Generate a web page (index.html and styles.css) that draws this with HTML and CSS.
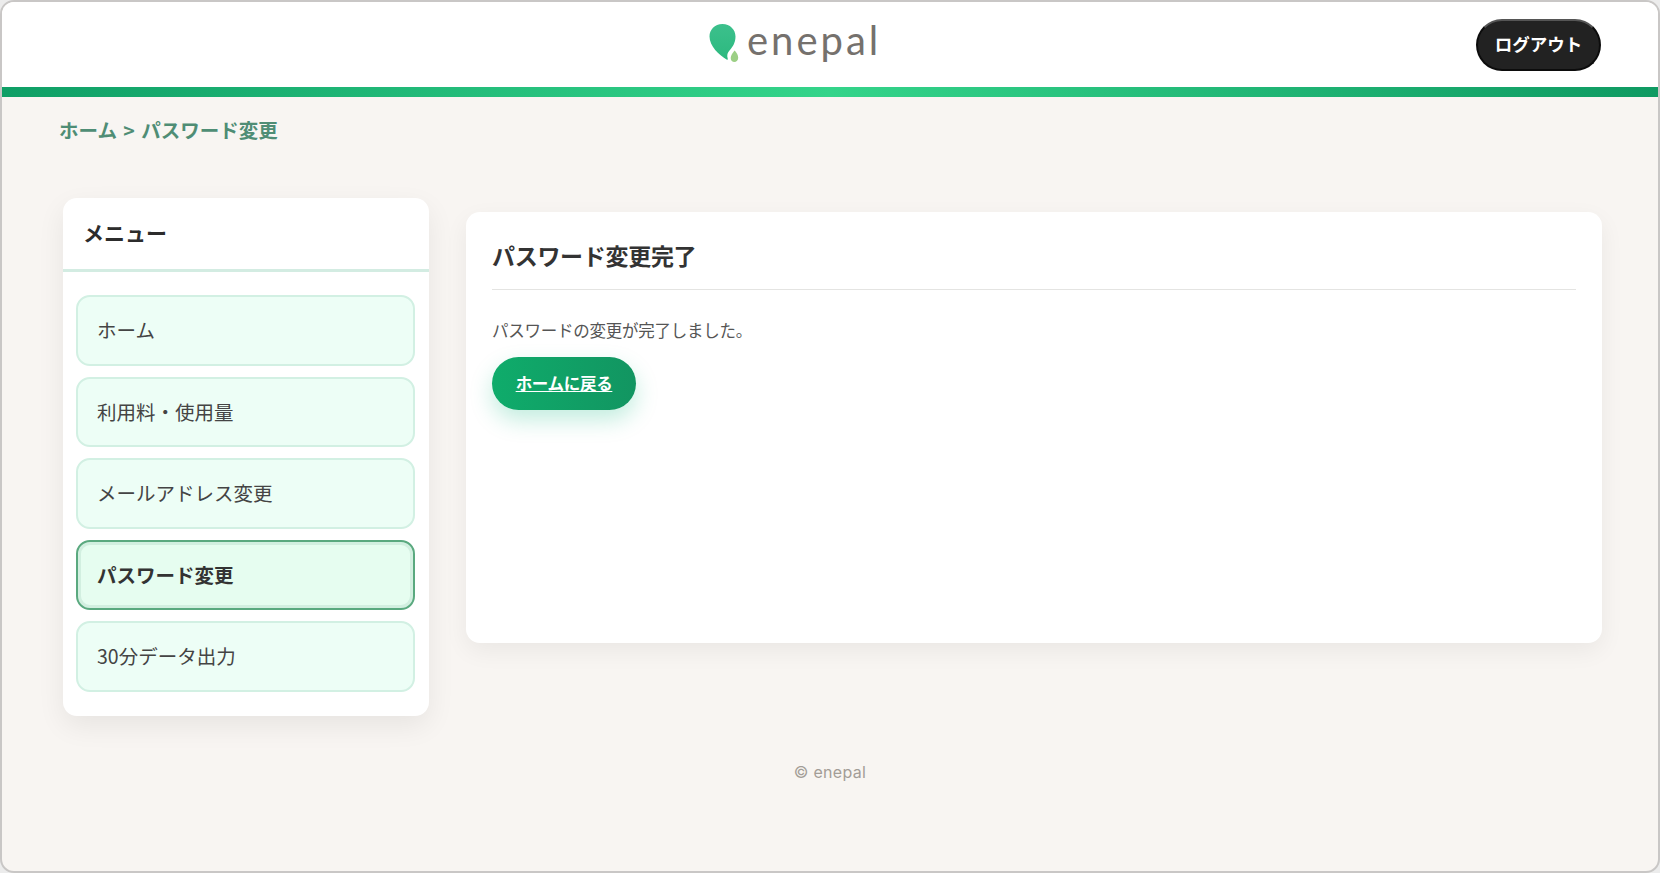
FILE: index.html
```html
<!DOCTYPE html>
<html lang="ja">
<head>
<meta charset="utf-8">
<title>パスワード変更 | enepal</title>
<link rel="stylesheet" href="styles.css">
</head>
<body>
<div class="window">
  <header class="topbar">
    <span class="topbar-side"></span>
    <a class="logo" href="#">
      <svg class="logo-mark" width="34" height="42" viewBox="0 0 34 42" aria-hidden="true">
        <defs>
          <linearGradient id="dropg" x1="0" y1="0" x2="0" y2="1">
            <stop offset="0" stop-color="#3cc08c"/>
            <stop offset="1" stop-color="#2cb97f"/>
          </linearGradient>
        </defs>
        <path d="M14.5 1C6.5 1 1.5 7 1.5 13.500C1.500 23 11 32 18.500 36.500C19.500 37 20 36.300 19.700 35.400C18.700 32.500 19.500 29.500 21.500 27.500C24.500 24 27.500 20 27.500 13.500C27.500 6.500 22 1 14.500 1Z" fill="url(#dropg)"/>
        <path d="M26.500 27.500C24.500 30 22.700 32.500 22.700 35C22.700 37.500 24.400 39 26.300 39C28.500 39 30.200 37.300 30.200 34.800C30.200 32 28.500 29.500 26.500 27.500Z" fill="#9ccf85"/>
      </svg>
      <span class="logo-text">enepal</span>
    </a>
    <div class="topbar-side topbar-right">
      <button class="logout" type="button">ログアウト</button>
    </div>
  </header>
  <div class="accent"></div>

  <nav class="crumbs"><a href="#">ホーム</a> &gt; <a href="#">パスワード変更</a></nav>

  <div class="content">
    <aside class="side">
      <h2 class="side-title">メニュー</h2>
      <ul class="menu">
        <li class="menu-item">ホーム</li>
        <li class="menu-item">利用料・使用量</li>
        <li class="menu-item">メールアドレス変更</li>
        <li class="menu-item is-active">パスワード変更</li>
        <li class="menu-item">30分データ出力</li>
      </ul>
    </aside>
    <main class="panel">
      <h1 class="panel-title">パスワード変更完了</h1>
      <p class="panel-text">パスワードの変更が完了しました。</p>
      <a class="home-btn" href="#">ホームに戻る</a>
    </main>
  </div>

  <footer class="foot">© enepal</footer>
</div>
</body>
</html>
```

FILE: styles.css
```css
* { box-sizing: border-box; }
html, body { margin: 0; padding: 0; background: #ececec; }
body {
  width: 1660px;
  height: 873px;
  overflow: hidden;
  font-family: "Noto Sans CJK JP", "Noto Sans", sans-serif;
  color: #333;
}
.window {
  width: 1660px;
  height: 873px;
  border: 2px solid #c9c7c6;
  border-radius: 14px;
  background: #f8f5f2;
  overflow: hidden;
  display: flex;
  flex-direction: column;
}
.topbar {
  height: 85px;
  background: #fff;
  display: grid;
  grid-template-columns: 706px auto 1fr;
  align-items: center;
  flex: none;
}
.topbar-right {
  display: flex;
  justify-content: flex-end;
  padding-right: 57px;
}
.logo {
  display: flex;
  align-items: flex-start;
  gap: 5px;
  text-decoration: none;
  margin-top: -4px;
}
.logo-mark { margin-top: 3px; }
.logo-text {
  font-family: Lato, "Noto Sans", sans-serif;
  font-weight: 400;
  font-size: 40px;
  line-height: 40px;
  letter-spacing: 3px;
  color: #75716d;
}
.logout {
  width: 125px;
  height: 52px;
  border-radius: 26px;
  border: 2px solid #0c0c0c;
  border-top-color: #555;
  background: #222;
  color: #fff;
  font-family: inherit;
  font-weight: 700;
  font-size: 17.500px;
  padding: 0 0 2px;
}
.accent {
  height: 10px;
  flex: none;
  background: linear-gradient(90deg, #0f9f66 0%, #34d48a 50%, #0f9a62 100%);
}
.crumbs {
  margin: 18px 0 0 57px;
  font-size: 19.500px;
  font-weight: 700;
  line-height: 30px;
  word-spacing: 2px;
  color: #4f8d75;
}
.crumbs a { color: inherit; text-decoration: none; }
.content {
  display: flex;
  align-items: flex-start;
  gap: 37px;
  margin: 53px 0 0 61px;
}
.side {
  width: 366px;
  height: 518px;
  flex: none;
  background: #fff;
  border-radius: 14px;
  box-shadow: 0 10px 28px rgba(0, 0, 0, .07);
}
.side-title {
  margin: 0;
  height: 74px;
  padding: 0 20px;
  font-size: 21px;
  font-weight: 700;
  line-height: 68px;
  border-bottom: 3px solid #d3ece2;
  color: #2c2c2c;
}
.menu {
  list-style: none;
  margin: 0;
  padding: 23px 14px 0 13px;
  display: flex;
  flex-direction: column;
  gap: 11px;
}
.menu-item {
  height: 70.500px;
  padding: 0 19px 1px;
  display: flex;
  align-items: center;
  font-size: 19.500px;
  background: #edfef6;
  border: 2px solid #d2f0e3;
  border-radius: 14px;
  color: #444;
}
.menu-item.is-active {
  font-weight: 700;
  background: #e6fdf0;
  border-color: #5aa97f;
  box-shadow: inset 0 0 0 3px #d2efe0;
  color: #333;
}
.panel {
  width: 1136px;
  height: 431px;
  margin-top: 14px;
  padding: 26px;
  background: #fff;
  border-radius: 14px;
  box-shadow: 0 8px 24px rgba(0, 0, 0, .06);
}
.panel-title {
  margin: 0;
  height: 52px;
  font-size: 23px;
  font-weight: 700;
  line-height: 34px;
  letter-spacing: -.3px;
  border-bottom: 1px solid #e4e4e2;
  color: #333;
}
.panel-text {
  margin: 25px 0 0;
  font-size: 16.500px;
  line-height: 30px;
  letter-spacing: -.25px;
  color: #555;
}
.home-btn {
  display: flex;
  align-items: center;
  justify-content: center;
  width: 144px;
  height: 53px;
  margin-top: 12px;
  padding-bottom: 2px;
  border-radius: 27px;
  background: linear-gradient(90deg, #0fac6b, #129561);
  box-shadow: 0 10px 22px rgba(16, 185, 129, .25);
  color: #fff;
  font-size: 16.500px;
  font-weight: 700;
  letter-spacing: -.3px;
  text-decoration: underline;
}
.foot {
  margin-top: 43px;
  text-align: center;
  font-family: Inter, "Noto Sans", sans-serif;
  font-size: 16px;
  line-height: 26px;
  letter-spacing: .3px;
  color: #a39d97;
}
```
